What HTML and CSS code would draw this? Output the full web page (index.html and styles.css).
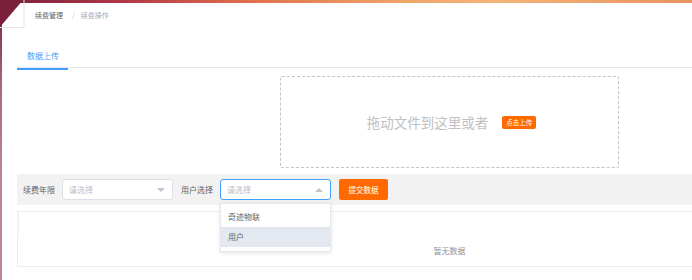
FILE: index.html
```html
<!DOCTYPE html>
<html lang="zh-CN">
  <head>
    <meta charset="UTF-8" />
    <meta name="viewport" content="width=device-width, initial-scale=1.0" />
    <title>续费操作</title>
    <link rel="stylesheet" href="styles.css">
  </head>
  <body>
    <div class="topbar"></div>
    <svg class="corner" width="26" height="29" viewBox="0 0 26 29">
      <polygon points="0,0 23,0 0,27" fill="#7b1f3b" />
      <polyline points="24,0 24,27.5 0,27.5" fill="none" stroke="#e6e6e6" stroke-width="1" />
    </svg>
    <div class="shell">
      <div class="rail"></div>
      <div class="main">
        <div class="breadcrumb">
          <span class="crumb">续费管理</span>
          <span class="sep">/</span>
          <span class="crumb current">续费操作</span>
        </div>

        <div class="content">
          <div class="tabs">
            <div class="tab active">数据上传</div>
          </div>

          <div class="upload-box">
            <span class="upload-text">拖动文件到这里或者</span>
            <span class="upload-btn">点击上传</span>
          </div>

          <div class="filter-bar">
            <label class="filter-label">续费年限</label>
            <div class="select">
              <span class="placeholder">请选择</span>
              <span class="arrow down"></span>
            </div>
            <label class="filter-label">用户选择</label>
            <div class="select focused">
              <span class="placeholder">请选择</span>
              <span class="arrow up"></span>
              <ul class="dropdown">
                <li>奇迹物联</li>
                <li class="hover">用户</li>
              </ul>
            </div>
            <button class="submit-btn">提交数据</button>
          </div>

          <div class="table">
            <div class="table-head"></div>
            <div class="table-empty">暂无数据</div>
          </div>
        </div>
      </div>
    </div>
  </body>
</html>
```

FILE: styles.css
```css
/* Page frame */
html,
body {
  overflow: hidden;
}

body {
  margin: 0;
  width: 692px;
  height: 280px;
  background: #fff;
  font-family: "Noto Sans CJK SC", "Noto Sans", sans-serif;
  color: #606266;
}

.topbar {
  height: 3px;
  background: linear-gradient(90deg, #7b1f3b 0%, #b03848 18%, #e0704c 36%, #f0a468 58%, #f4b476 72%, #e89262 100%);
}

.corner {
  position: absolute;
  top: 0;
  left: 0;
}

.shell {
  display: flex;
  height: 277px;
}

.rail {
  width: 2px;
  flex: none;
  background: linear-gradient(180deg, #7b1f3b 0%, #a86884 30%, #b98399 60%, #bd889e 100%);
}

.main {
  flex: none;
  width: 880px;
}

/* Breadcrumb */
.breadcrumb {
  height: 24px;
  display: flex;
  align-items: center;
  padding-left: 33px;
  font-size: 7px;
  white-space: nowrap;
}

.crumb {
  color: #606266;
}

.sep {
  margin: 0 6px 0 9px;
  color: #c0c4cc;
}

.crumb.current {
  color: #a8abb2;
}

/* Content area */
.content {
  padding-left: 15px;
  width: 865px;
}

.tabs {
  margin-top: 15px;
  height: 25px;
  border-bottom: 1px solid #e4e7ed;
  display: flex;
}

.tab {
  font-size: 8px;
  padding: 0 9px 0 10px;
  line-height: 27px;
  height: 26px;
  color: #606266;
  white-space: nowrap;
}

.tab.active {
  color: #409eff;
  border-bottom: 2px solid #409eff;
}

/* Upload drop zone */
.upload-box {
  width: 333px;
  height: 90px;
  margin: 8px auto 0;
  border: 1px dashed #c0c4cc;
  border-radius: 2px;
  display: flex;
  align-items: center;
  justify-content: center;
  padding-left: 4px;
}

.upload-text {
  font-size: 13.5px;
  color: #c0c0c0;
  white-space: nowrap;
}

.upload-btn {
  margin-left: 14px;
  background: #ff6a00;
  color: #fff;
  font-size: 6.5px;
  padding: 0 4px;
  height: 13px;
  line-height: 13px;
  border-radius: 2px;
  white-space: nowrap;
}

/* Filter bar */
.filter-bar {
  margin-top: 6px;
  height: 31px;
  background: #f2f2f2;
  display: flex;
  align-items: center;
  padding-left: 6px;
}

.filter-label {
  font-size: 8px;
  color: #606266;
  margin-right: 7px;
  white-space: nowrap;
}

.select {
  position: relative;
  width: 111px;
  height: 21px;
  box-sizing: border-box;
  border: 1px solid #dcdfe6;
  border-radius: 3px;
  background: #fff;
  display: flex;
  align-items: center;
  padding-left: 6px;
  margin-right: 8px;
}

.select.focused {
  border-color: #409eff;
}

.placeholder {
  font-size: 8px;
  color: #b8bcc4;
  flex: 1;
}

.arrow {
  width: 0;
  height: 0;
  margin-right: 7px;
  border-left: 4px solid transparent;
  border-right: 4px solid transparent;
}

.arrow.down {
  border-top: 4px solid #c0c4cc;
}

.arrow.up {
  border-bottom: 4px solid #c0c4cc;
}

.dropdown {
  position: absolute;
  top: 23px;
  left: -1px;
  width: 111px;
  margin: 0;
  padding: 3px 0 4px;
  list-style: none;
  background: #fff;
  border: 1px solid #e4e7ed;
  box-sizing: border-box;
  box-shadow: 0 1px 4px rgba(0, 0, 0, 0.12);
  z-index: 2;
}

.dropdown li {
  height: 20px;
  line-height: 20px;
  padding-left: 7px;
  font-size: 8px;
  color: #606266;
}

.dropdown li.hover {
  background: #e4e8f1;
}

.submit-btn {
  width: 49px;
  height: 21px;
  border: none;
  border-radius: 2px;
  background: #ff6a00;
  color: #fff;
  font-family: inherit;
  font-size: 7.5px;
  padding: 0;
  cursor: pointer;
}

/* Empty table */
.table {
  margin-top: 6px;
  height: 56px;
  border: 1px solid #ebeef5;
  box-sizing: border-box;
}

.table-head {
  height: 21px;
  border-left: 2px solid #eef2f8;
  margin-left: -1px;
}

.table-empty {
  height: 33px;
  line-height: 35px;
  text-align: center;
  font-size: 8px;
  color: #909399;
}
```
